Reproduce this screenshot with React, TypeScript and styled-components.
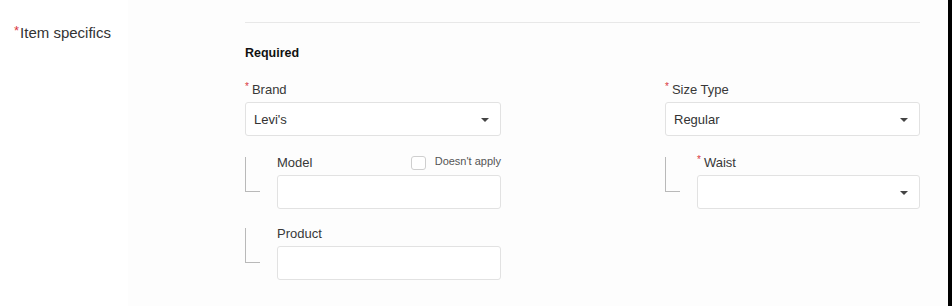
import * as React from 'react';
import styled, { createGlobalStyle } from 'styled-components';

const GlobalStyle = createGlobalStyle`
  html, body {
    margin: 0;
    padding: 0;
    background: #ffffff;
  }
  body {
    font-family: "Liberation Sans", Arial, Helvetica, sans-serif;
    color: #333;
  }
`;

const Page = styled.div`
  display: flex;
  width: 952px;
  height: 306px;
  overflow: hidden;
`;

const LabelCol = styled.div`
  width: 114px;
  padding: 24px 0 0 14px;
  background: #ffffff;
  font-size: 15px;
  line-height: 18px;
  color: #333;
  white-space: nowrap;
`;

const Star = styled.span<{ $size?: number }>`
  color: #d9363e;
  font-size: ${p => p.$size || 10}px;
  vertical-align: top;
  line-height: 1;
  margin-right: ${p => (p.$size ? 1 : 3)}px;
`;

const Main = styled.div`
  flex: 1;
  background: #fdfdfd;
  padding: 22px 28px 0 117px;
`;

const Section = styled.section`
  border-top: 1px solid #e8e8e8;
  padding-top: 22px;
`;

const Heading = styled.h3`
  margin: 0 0 21px;
  font-size: 12.5px;
  line-height: 16px;
  font-weight: bold;
  color: #111;
`;

const Grid = styled.div`
  display: grid;
  grid-template-columns: 256px 255px;
  justify-content: space-between;
`;

const Column = styled.div`
  display: flex;
  flex-direction: column;
`;

const Label = styled.div`
  font-size: 13px;
  line-height: 16px;
  color: #383838;
  margin-bottom: 4px;
`;

const Box = styled.div`
  position: relative;
  box-sizing: border-box;
  height: 34px;
  background: #fff;
  border: 1px solid #e2e2e2;
  border-radius: 3px;
  padding: 0 30px 0 8px;
  display: flex;
  align-items: center;
  font-size: 13px;
  color: #333;
`;

const Caret = styled.span`
  position: absolute;
  right: 11px;
  top: 15px;
  width: 0;
  height: 0;
  border-left: 4px solid transparent;
  border-right: 4px solid transparent;
  border-top: 4px solid #444;
`;

const SubRow = styled.div<{ $top: number }>`
  display: flex;
  margin-top: ${p => p.$top}px;
`;

const Bracket = styled.div`
  flex: none;
  width: 14px;
  height: 34px;
  margin: 2px 17px 0 0;
  border-left: 1px solid #b9b9b9;
  border-bottom: 1px solid #b9b9b9;
`;

const SubField = styled.div`
  flex: 1;
  display: flex;
  flex-direction: column;
`;

const SubLabelRow = styled.div`
  display: flex;
  justify-content: space-between;
  align-items: flex-start;
  height: 16px;
  margin-bottom: 4px;
`;

const SubLabel = styled.span`
  font-size: 13px;
  line-height: 16px;
  color: #383838;
`;

const Check = styled.label`
  display: flex;
  align-items: flex-start;
  font-size: 11px;
  line-height: 11px;
  color: #555;
`;

const CheckBox = styled.span`
  box-sizing: border-box;
  width: 15px;
  height: 14px;
  border: 1px solid #cfcfcf;
  border-radius: 3px;
  background: #fff;
  margin: 1px 9px 0 0;
`;

const CheckText = styled.span`
  margin-top: 1px;
`;

const EdgeBar = styled.div`
  width: 4px;
  background: #000;
`;

const Select = ({ value }: { value?: string }) => (
  <Box>
    {value}
    <Caret />
  </Box>
);

export default function App() {
  return (
    <>
      <GlobalStyle />
      <Page>
        <LabelCol>
          <Star $size={13}>*</Star>Item specifics
        </LabelCol>
        <Main>
          <Section>
            <Heading>Required</Heading>
            <Grid>
              <Column>
                <Label>
                  <Star>*</Star>Brand
                </Label>
                <Select value="Levi's" />
                <SubRow $top={19}>
                  <Bracket />
                  <SubField>
                    <SubLabelRow>
                      <SubLabel>Model</SubLabel>
                      <Check>
                        <CheckBox />
                        <CheckText>Doesn't apply</CheckText>
                      </Check>
                    </SubLabelRow>
                    <Box />
                  </SubField>
                </SubRow>
                <SubRow $top={17}>
                  <Bracket />
                  <SubField>
                    <SubLabelRow>
                      <SubLabel>Product</SubLabel>
                    </SubLabelRow>
                    <Box />
                  </SubField>
                </SubRow>
              </Column>
              <Column>
                <Label>
                  <Star>*</Star>Size Type
                </Label>
                <Select value="Regular" />
                <SubRow $top={19}>
                  <Bracket />
                  <SubField>
                    <SubLabelRow>
                      <SubLabel>
                        <Star>*</Star>Waist
                      </SubLabel>
                    </SubLabelRow>
                    <Select />
                  </SubField>
                </SubRow>
              </Column>
            </Grid>
          </Section>
        </Main>
        <EdgeBar />
      </Page>
    </>
  );
}
